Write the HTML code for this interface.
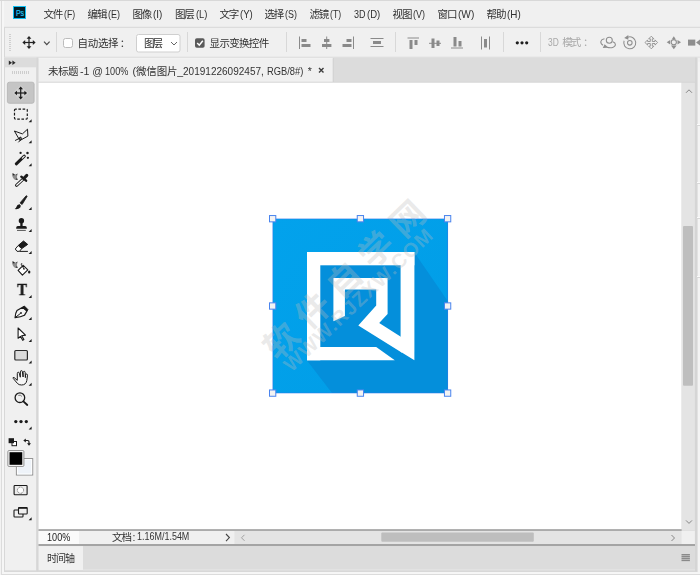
<!DOCTYPE html>
<html lang="zh-CN">
<head>
<meta charset="utf-8">
<title>Photoshop</title>
<style>
html,body{margin:0;padding:0;}
body{width:700px;height:575px;overflow:hidden;background:#f0f0f0;position:relative;
 font-family:"Liberation Sans","Noto Sans CJK SC",sans-serif;font-size:12px;color:#1e1e1e;}
.abs{position:absolute;}
svg{position:absolute;overflow:visible;}
.tx{position:absolute;left:0;line-height:16px;white-space:nowrap;}
.tx span{position:absolute;top:0;white-space:pre;transform-origin:0 50%;}
</style>
</head>
<body>

<!-- window chrome -->
<svg class="abs" style="left:0;top:0;" width="700" height="575" viewBox="0 0 700 575">
  <rect x="0" y="0" width="700" height="575" fill="#f0f0f0"/>
  <rect x="0" y="0" width="700" height="1" fill="#d8d8d8"/>
  <!-- outer frame -->
  <rect x="0" y="1" width="1" height="574" fill="#f3f3f3"/>
  <rect x="1" y="1" width="1" height="574" fill="#dcdcdc"/>
  <rect x="2" y="1" width="2" height="573" fill="#f6f6f6"/>
  <!-- workspace background -->
  <rect x="4" y="57.500" width="693.500" height="514.500" fill="#d8d8d8"/>
  <rect x="2" y="572" width="698" height="2" fill="#f6f6f6"/>
  <rect x="1" y="574" width="699" height="1" fill="#dcdcdc"/>
  <!-- options bar -->
  <rect x="4" y="26.800" width="696" height="30.700" fill="#d8d8d8"/>
  <rect x="5" y="27.800" width="695" height="29" fill="#f0f0f0"/>
  <rect x="5" y="56.800" width="695" height="0.700" fill="#e6e6e6"/>
  <!-- toolbar -->
  <rect x="5" y="57.500" width="31.400" height="512.800" fill="#f0f0f0"/>
  <rect x="4.700" y="57.500" width="31.700" height="9.800" fill="#dcdcdc"/>
  <rect x="36.400" y="57.500" width="2.200" height="514" fill="#d6d6d6"/>
  <!-- tab bar -->
  <rect x="38.600" y="57.500" width="656.700" height="25" fill="#dcdcdc"/>
  <rect x="38.600" y="58.200" width="294.200" height="23.700" fill="#f0f0f0"/>
  <rect x="38.600" y="57.900" width="294.200" height="0.700" fill="#f6f6f6"/>
  <rect x="332.800" y="58" width="0.900" height="23.900" fill="#d0d0d0"/>
  <rect x="38.600" y="81.800" width="656.700" height="0.900" fill="#d2d2d2"/>
  <!-- canvas -->
  <rect x="38.600" y="82.700" width="643" height="446.600" fill="#ffffff"/>
  <!-- v scrollbar -->
  <rect x="681.600" y="82.700" width="13.300" height="448" fill="#e4e4e4"/>
  <rect x="683" y="226" width="10" height="159.700" rx="1" fill="#bebebe"/>
  <!-- status bar -->
  <rect x="38.600" y="529.100" width="643" height="1.900" fill="#ababab"/>
  <rect x="38.600" y="531" width="656.300" height="13" fill="#f0f0f0"/>
  <rect x="38.600" y="531" width="40.400" height="13" fill="#fafafa"/>
  <rect x="234.400" y="531" width="447.200" height="13" fill="#e4e4e4"/>
  <rect x="381.300" y="532.500" width="152.500" height="9.200" rx="1" fill="#bebebe"/>
  <!-- timeline -->
  <rect x="38.600" y="544" width="657.200" height="2.100" fill="#a4a4a4"/>
  <rect x="38.600" y="546.100" width="656.400" height="23.300" fill="#dcdcdc"/>
  <rect x="38.600" y="546.100" width="44.400" height="24.100" fill="#f0f0f0"/>
  <rect x="83" y="569.400" width="612" height="1" fill="#e8e8e8"/>
  <!-- right dock -->
  <rect x="695" y="57.500" width="2" height="514" fill="#d5d5d5"/>
  <rect x="697" y="57.500" width="1" height="514.500" fill="#e2e2e2"/>
  <rect x="698" y="61.700" width="2" height="510.300" fill="#f4f4f4"/>
</svg>

<!-- Ps logo -->
<div class="abs" style="left:13px;top:6px;width:11px;height:11px;background:#001c26;border:1px solid #10bff2;"></div>
<div class="abs" style="left:12.500px;top:6.700px;width:14px;height:11px;line-height:11px;font-size:9.500px;color:#22c6f8;-webkit-text-stroke:0.2px #22c6f8;text-align:center;transform:scaleX(0.740);transform-origin:50% 50%;">Ps</div>

<!-- options bar content -->
<svg class="abs" style="left:0;top:0;" width="700" height="58" viewBox="0 0 700 58">
  <!-- grip -->
  <g fill="#cfcfcf">
    <rect x="9" y="34" width="2" height="1"/><rect x="9" y="36" width="2" height="1"/><rect x="9" y="38" width="2" height="1"/><rect x="9" y="40" width="2" height="1"/><rect x="9" y="42" width="2" height="1"/><rect x="9" y="44" width="2" height="1"/><rect x="9" y="46" width="2" height="1"/><rect x="9" y="48" width="2" height="1"/><rect x="9" y="50" width="2" height="1"/>
  </g>
  <!-- move icon -->
  <g id="moveic" transform="translate(29 42.5)" fill="#222" stroke="none">
    <rect x="-4.5" y="-0.6" width="9" height="1.2"/><rect x="-0.6" y="-4.5" width="1.2" height="9"/>
    <polygon points="0,-6.6 2.4,-3.8 -2.4,-3.8"/><polygon points="0,6.6 2.4,3.8 -2.4,3.8"/>
    <polygon points="-6.6,0 -3.8,-2.4 -3.8,2.4"/><polygon points="6.6,0 3.8,-2.4 3.8,2.4"/>
  </g>
  <polyline points="44,41.600 46.800,44.600 49.600,41.600" fill="none" stroke="#4a4a4a" stroke-width="1.200"/>
  <rect x="56" y="32" width="1" height="20" fill="#d8d8d8"/>
  <rect x="63.500" y="38.500" width="9" height="9" rx="2" fill="#fff" stroke="#bcbcbc"/>
  <!-- dropdown -->
  <rect x="136.5" y="34.5" width="43.5" height="17.5" rx="2" fill="#fff" stroke="#cfcfcf"/>
  <polyline points="171,42 174,45 177,42" fill="none" stroke="#666" stroke-width="1"/>
  <rect x="187" y="32" width="1" height="20" fill="#d8d8d8"/>
  <rect x="195" y="38.200" width="9.600" height="9.600" rx="1.800" fill="#5a5a5a"/>
  <polyline points="197.2,43 199.3,45.2 202.8,40.8" fill="none" stroke="#fff" stroke-width="1.5"/>
  <rect x="286" y="32" width="1" height="20" fill="#d8d8d8"/>
  <!-- align icons -->
  <g fill="#8a8a8a">
    <rect x="299" y="36.5" width="1" height="12.5"/><rect x="301.5" y="39" width="5" height="3"/><rect x="301.5" y="44" width="9" height="3"/>
    <rect x="326.2" y="36.5" width="1" height="12.5"/><rect x="324" y="39" width="5.4" height="3"/><rect x="322" y="44" width="9.4" height="3"/>
    <rect x="353" y="36.5" width="1" height="12.5"/><rect x="346.5" y="39" width="5" height="3"/><rect x="342.5" y="44" width="9" height="3"/>
    <rect x="370.5" y="38" width="13" height="1"/><rect x="373" y="41" width="8" height="3"/><rect x="370.5" y="46" width="13" height="1"/>
  </g>
  <rect x="395" y="32" width="1" height="20" fill="#d8d8d8"/>
  <g fill="#8a8a8a">
    <rect x="407.5" y="37.5" width="11.5" height="1"/><rect x="409.5" y="40" width="3" height="9"/><rect x="414.5" y="40" width="3" height="5"/>
    <rect x="429" y="42.8" width="12" height="1"/><rect x="431.5" y="38.5" width="3" height="9.5"/><rect x="436.5" y="40.5" width="3" height="5.5"/>
    <rect x="451" y="47.5" width="12" height="1"/><rect x="453.5" y="37" width="3" height="9.5"/><rect x="458.5" y="41" width="3" height="5.5"/>
    <rect x="481" y="36.5" width="1" height="13"/><rect x="484" y="39" width="3" height="8.5"/><rect x="489" y="36.5" width="1" height="13"/>
  </g>
  <rect x="503" y="32" width="1" height="20" fill="#d8d8d8"/>
  <g fill="#1e1e1e"><circle cx="517.3" cy="42.8" r="1.6"/><circle cx="522" cy="42.8" r="1.6"/><circle cx="526.7" cy="42.8" r="1.6"/></g>
  <rect x="540" y="32" width="1" height="20" fill="#d8d8d8"/>
  <!-- 3D icons -->
  <g fill="none" stroke="#8e8e8e" stroke-width="1.050">
    <circle cx="609.300" cy="40.300" r="3"/>
    <path d="M604.500,38.700 C600.500,39.500 599.300,42.800 603,45.300 M607,47.200 C611,48.300 615.300,47.500 615.400,44.600 C615.400,43.200 614.200,42.300 612.800,41.800"/>
    <path d="M627.700,37.200 A6,6 0 1 1 624.100,40.800"/>
    <circle cx="629.800" cy="42.800" r="2.300"/>
    <path transform="translate(651.300 42.500)" stroke-width="0.900" stroke-linejoin="round" d="M0,-6.300 L2.600,-3.700 L1,-3.700 L1,-1 L3.700,-1 L3.700,-2.600 L6.300,0 L3.700,2.600 L3.700,1 L1,1 L1,3.700 L2.600,3.700 L0,6.300 L-2.600,3.700 L-1,3.700 L-1,1 L-3.700,1 L-3.700,2.600 L-6.300,0 L-3.700,-2.600 L-3.700,-1 L-1,-1 L-1,-3.700 L-2.600,-3.700 Z"/>
    <circle cx="673.800" cy="42.200" r="2.600"/>
  </g>
  <g fill="#8e8e8e">
    <polygon points="602.800,47.900 608.500,47.700 604.600,44.300"/>
    <polygon points="624.200,37.900 628.300,35 628.300,39.800"/>
    <polygon points="666.700,42.200 670.200,39.900 670.200,44.500"/><polygon points="681,42.200 677.500,39.900 677.500,44.500"/>
    <polygon points="673.800,36.300 672,38.900 675.600,38.900"/><polygon points="673.800,49.200 671,45.600 676.600,45.600"/>
    <rect x="688" y="39.600" width="7.300" height="6"/><polygon points="696,42.600 700,39.600 700,45.600"/>
  </g>
</svg>

<svg class="abs" style="left:0;top:0;" width="700" height="575" viewBox="0 0 700 575">
  <defs>
    <linearGradient id="bg" x1="0" y1="0" x2="1" y2="1">
      <stop offset="0" stop-color="#02a2ec"/><stop offset="1" stop-color="#019de6"/>
    </linearGradient>
    <clipPath id="sq"><rect x="273" y="219" width="175" height="174"/></clipPath>
    <g id="wm" font-family="'Liberation Sans','Noto Sans CJK SC',sans-serif" stroke="none">
      <g transform="translate(344.7 280) rotate(-44)">
        <text x="5" y="12" font-size="34" font-weight="bold" text-anchor="middle" letter-spacing="10">软件自学网</text>
      </g>
      <g transform="translate(358.5 299.5) rotate(-43.5)">
        <text x="0" y="7" font-size="20" font-weight="bold" text-anchor="middle" letter-spacing="1.200">WWW.RJZXW.COM</text>
      </g>
    </g>
  </defs>
  <rect x="273" y="219" width="175" height="174" fill="url(#bg)"/>
  <polygon points="307,252 414,252 448,301.500 448,393 332,393 307,360.500" fill="#048fdb"/>
  <g fill="#fff">
    <rect x="307" y="252" width="107.4" height="13.3"/>
    <rect x="307" y="252" width="13.3" height="108.3"/>
    <polygon points="307,346.9 376.2,346.9 394.8,360.3 307,360.3"/>
    <polygon points="400.6,252 414.4,252 414.4,360.3 400.6,351.8"/>
    <polygon points="333.4,278 387.6,278 387.6,314 379.2,323.1 402,337.4 402,352.7 358.3,325.6 376.2,305.5 376.2,289.5 344.9,289.5 344.9,316 333.4,321.2"/>
  </g>
  <use href="#wm" fill="#bdbdbd" fill-opacity="0.330"/>
  <!-- transform box -->
  <rect x="272.800" y="218.900" width="174.900" height="174.100" fill="none" stroke="#2f7be8" stroke-width="0.700" stroke-opacity="0.800"/>
  <g fill="#f3f3f3" stroke="#4a84ee" stroke-width="1">
    <rect x="269.500" y="215.550" width="6.300" height="6.300"/>
    <rect x="357.250" y="215.550" width="6.300" height="6.300"/>
    <rect x="444.450" y="215.550" width="6.300" height="6.300"/>
    <rect x="269.500" y="302.850" width="6.300" height="6.300"/>
    <rect x="444.450" y="302.850" width="6.300" height="6.300"/>
    <rect x="269.500" y="389.950" width="6.300" height="6.300"/>
    <rect x="357.250" y="389.950" width="6.300" height="6.300"/>
    <rect x="444.450" y="389.950" width="6.300" height="6.300"/>
  </g>
</svg>

<svg class="abs" style="left:0;top:0;" width="40" height="575" viewBox="0 0 40 575">
  <!-- header arrows + grip -->
  <g fill="#2a2a2a"><polygon points="8.800,60.500 12,62.800 8.800,65.100"/><polygon points="12.400,60.500 15.600,62.800 12.400,65.100"/></g>
  <g fill="#cdcdcd">
    <rect x="12" y="71" width="1" height="3"/><rect x="14" y="71" width="1" height="3"/><rect x="16" y="71" width="1" height="3"/><rect x="18" y="71" width="1" height="3"/><rect x="20" y="71" width="1" height="3"/><rect x="22" y="71" width="1" height="3"/><rect x="24" y="71" width="1" height="3"/><rect x="26" y="71" width="1" height="3"/><rect x="28" y="71" width="1" height="3"/>
  </g>
  <!-- selected move tool -->
  <rect x="7.400" y="82.200" width="26.700" height="21.100" rx="2" fill="#c5c5c5" stroke="#b2b2b2" stroke-width="0.800"/>
  <polygon points="20.700,85.200 28.500,93 20.700,100.800 12.900,93" fill="#fff" fill-opacity="0.220"/>
  <g transform="translate(20.7 93)" fill="#1a1a1a">
    <rect x="-4.500" y="-0.600" width="9" height="1.200"/><rect x="-0.600" y="-4.500" width="1.200" height="9"/>
    <polygon points="0,-6.400 2.300,-3.700 -2.300,-3.700"/><polygon points="0,6.400 2.300,3.700 -2.300,3.700"/>
    <polygon points="-6.400,0 -3.700,-2.300 -3.700,2.300"/><polygon points="6.400,0 3.700,-2.300 3.700,2.300"/>
  </g>
  <!-- flyout triangles -->
  <g fill="#1a1a1a">
    <polygon points="31.600,119.300 31.600,122.200 28.600,122.200"/>
    <polygon points="31.600,140.300 31.600,143.200 28.600,143.200"/>
    <polygon points="31.600,163.300 31.600,166.200 28.600,166.200"/>
    <polygon points="31.600,207.100 31.600,210.000 28.600,210.000"/>
    <polygon points="31.600,229.100 31.600,232.000 28.600,232.000"/>
    <polygon points="31.600,251.000 31.600,253.900 28.600,253.900"/>
    <polygon points="31.600,295.100 31.600,298.000 28.600,298.000"/>
    <polygon points="31.600,317.100 31.600,320.000 28.600,320.000"/>
    <polygon points="31.600,339.000 31.600,341.900 28.600,341.900"/>
    <polygon points="31.600,360.500 31.600,363.400 28.600,363.400"/>
    <polygon points="31.600,382.800 31.600,385.700 28.600,385.700"/>
    <polygon points="31.600,426.500 31.600,429.400 28.600,429.400"/>
    <polygon points="31.600,517.300 31.600,520.200 28.600,520.200"/>
  </g>
  <!-- marquee -->
  <rect x="14.500" y="109.100" width="12.800" height="10" rx="1" fill="none" stroke="#1a1a1a" stroke-width="1.200" stroke-dasharray="2.600 1.600" stroke-dashoffset="1.300"/>
  <!-- polygonal lasso -->
  <g fill="none" stroke="#1a1a1a" stroke-width="1" stroke-linejoin="round">
    <polygon points="14.400,131 22.400,133.900 27.500,129.200 27.900,136.100 19.900,140.500"/>
    <path d="M21,137.600 L15.100,140.500 M21.700,138.700 L18.400,142.300"/>
    <circle cx="20.400" cy="138.200" r="1"/>
  </g>
  <!-- magic wand -->
  <line x1="16.300" y1="163.800" x2="24.300" y2="156.200" stroke="#1a1a1a" stroke-width="3" stroke-linecap="round"/>
  <line x1="22.300" y1="158.100" x2="24.200" y2="156.300" stroke="#f0f0f0" stroke-width="1.200" stroke-linecap="round"/>
  <g fill="#1a1a1a"><circle cx="20.600" cy="152.900" r="1.150"/><circle cx="27.500" cy="152.900" r="1.250"/><circle cx="27.900" cy="157.800" r="1.150"/></g>
  <!-- eyedropper -->
  <g>
    <line x1="16.500" y1="185.300" x2="22.600" y2="179.700" stroke="#1a1a1a" stroke-width="3" stroke-linecap="round"/>
    <line x1="16.600" y1="185.200" x2="22.600" y2="179.700" stroke="#fff" stroke-width="1.200" stroke-linecap="round"/>
    <line x1="21.300" y1="176.700" x2="26.100" y2="180.700" stroke="#1a1a1a" stroke-width="2.400" stroke-linecap="round"/>
    <line x1="23.700" y1="178.600" x2="26.800" y2="175.400" stroke="#1a1a1a" stroke-width="3" stroke-linecap="round"/>
    <g transform="translate(0 -88)">
      <path d="M12.800,261.300 L15,262.800 L17.600,261.700 Q16.200,264.600 17.800,267.700 L14.400,267.400 Q11.400,265 12.800,261.300 Z" fill="#8e8e8e"/>
      <polygon points="12.600,261.100 15.200,262.900 12.700,263.400" fill="#2a2a2a"/>
      <polygon points="17.900,267.900 15.200,267.600 16.600,266.200" fill="#2a2a2a"/>
      <polygon points="17.700,261.500 16.600,263.600 15.600,262.600" fill="#555"/>
    </g>
  </g>
  <!-- brush -->
  <path d="M27.200,196.200 L22.100,204.500 L20,202.900 L26.200,195.700 Z" fill="#1a1a1a" stroke="#1a1a1a" stroke-width="0.800" stroke-linejoin="round"/>
  <path d="M19.700,204.300 q2,1.500 0.600,3.300 q-1.800,2 -5.600,1.500 q1.500,-0.800 1.800,-2.300 q0.500,-2.600 3.200,-2.500 Z" fill="#1a1a1a"/>
  <!-- stamp -->
  <g fill="#1a1a1a">
    <circle cx="21.400" cy="220.800" r="2.700"/>
    <rect x="20.300" y="222.500" width="2.300" height="4.500"/>
    <path d="M16.200,228.700 v-1 q0,-1.600 1.600,-1.600 h7.400 q1.600,0 1.600,1.600 v1 Z"/>
    <rect x="17" y="229.900" width="8.800" height="0.900" fill="#444"/>
  </g>
  <!-- eraser -->
  <g stroke="#1a1a1a" stroke-width="1" stroke-linejoin="round">
    <polygon points="23.500,241 27.700,244.400 21.700,248.600 18.200,245.500" fill="#1a1a1a"/>
    <polygon points="18.200,245.500 21.700,248.600 19.500,251.300 17,251.300 15.300,249" fill="#fff"/>
    <line x1="19.500" y1="251.400" x2="27.900" y2="251.400"/>
  </g>
  <!-- paint bucket -->
  <g>
    <polygon points="23.200,265.300 27.800,269.900 22.400,275.100 18.100,270.300" fill="#fff" stroke="#1a1a1a" stroke-width="1.100" stroke-linejoin="round"/>
    <path d="M24,269 L21.300,264.500 q-0.300,-1.300 1,-0.600" fill="none" stroke="#1a1a1a" stroke-width="1"/>
    <ellipse cx="29.200" cy="272" rx="1.200" ry="1.500" fill="#1a1a1a"/>
    <circle cx="24" cy="269" r="0.800" fill="#1a1a1a"/>
    <g transform="translate(0 0)">
      <path d="M12.800,261.300 L15,262.800 L17.600,261.700 Q16.200,264.600 17.800,267.700 L14.400,267.400 Q11.400,265 12.800,261.300 Z" fill="#8e8e8e"/>
      <polygon points="12.600,261.100 15.200,262.900 12.700,263.400" fill="#2a2a2a"/>
      <polygon points="17.900,267.900 15.200,267.600 16.600,266.200" fill="#2a2a2a"/>
      <polygon points="17.700,261.500 16.600,263.600 15.600,262.600" fill="#555"/>
    </g>
  </g>
  <!-- pen -->
  <g stroke="#1a1a1a" stroke-linejoin="round">
    <path d="M15.100,317.700 Q15.300,313 17,310.500 L22.600,307.300 L27,311 L24.400,315.300 Q21,317.200 15.100,317.700 Z" fill="#f4f4f4" stroke-width="1.300"/>
    <polygon points="22.600,307.300 24.300,306 27.900,309.600 27,311" fill="#1a1a1a" stroke-width="1"/>
    <line x1="15.300" y1="317.500" x2="20.600" y2="313.300" stroke-width="1"/>
    <circle cx="21" cy="313" r="0.900" fill="#1a1a1a" stroke="none"/>
  </g>
  <!-- path selection arrow -->
  <path d="M18.100,328 L18.100,338.300 L20.400,336.300 L22.700,340.300 L23.900,339.600 L21.700,335.700 L25.500,335.100 Z" fill="#fff" stroke="#1a1a1a" stroke-width="1.100" stroke-linejoin="round"/>
  <!-- rectangle -->
  <rect x="14.800" y="350.500" width="12.600" height="9.500" rx="1" fill="#dadada" stroke="#2a2a2a" stroke-width="1.200"/>
  <!-- hand -->
  <path d="M17.300,380.300 L14,377.500 q-1.300,-0.400 -0.800,0.900 L17.500,383.500 q1.400,1.500 4,1.500 q4.500,0 5.300,-4.500 L27.500,375.200 q-0.100,-1.200 -1,-1.200 q-0.900,0 -1,1.200 L25.400,377.600 L25.200,372.500 q-0.100,-1.200 -1,-1.200 q-0.900,0 -1,1.200 L23.100,377 L22.400,371.800 q-0.100,-1.200 -1,-1.200 q-0.900,0 -1,1.200 L20.300,377.200 L19.300,373.200 q-0.300,-1.200 -1.200,-1 q-0.900,0.200 -0.800,1.400 Z" fill="#f6f6f6" stroke="#1a1a1a" stroke-width="1" stroke-linejoin="round"/>
  <!-- zoom -->
  <circle cx="19.900" cy="397.700" r="4.800" fill="none" stroke="#1a1a1a" stroke-width="1.300"/>
  <path d="M18.300,395.400 q2.200,-0.900 3.600,1" fill="none" stroke="#555" stroke-width="0.800"/>
  <line x1="23.400" y1="401.300" x2="27.300" y2="405" stroke="#1a1a1a" stroke-width="1.800" stroke-linecap="round"/>
  <!-- more -->
  <g fill="#1a1a1a"><circle cx="15.800" cy="421.600" r="1.650"/><circle cx="21" cy="421.600" r="1.650"/><circle cx="26.300" cy="421.600" r="1.650"/></g>
  <!-- default colors / swap -->
  <rect x="12" y="441.500" width="4.500" height="4.200" fill="#fff" stroke="#1a1a1a" stroke-width="1"/>
  <rect x="8.600" y="438.200" width="5.400" height="5" fill="#1a1a1a"/>
  <path d="M25,440.500 h2.600 q1.400,0 1.400,1.400 v2" fill="none" stroke="#1a1a1a" stroke-width="1.200"/>
  <polygon points="23.300,440.500 25.800,438.500 25.800,442.500" fill="#1a1a1a"/>
  <polygon points="29,445.800 27,443.300 31,443.300" fill="#1a1a1a"/>
  <!-- bg / fg swatches -->
  <rect x="16.400" y="458.600" width="16.300" height="16.400" fill="#eef3f9" stroke="#8c8c8c" stroke-width="1"/>
  <rect x="17.400" y="459.600" width="14.300" height="14.400" fill="none" stroke="#fff" stroke-width="1"/>
  <rect x="7.900" y="450.600" width="16" height="15.800" rx="1" fill="#fff" stroke="#8c8c8c" stroke-width="1"/>
  <rect x="9.500" y="452.200" width="12.800" height="12.600" fill="#000"/>
  <!-- quick mask -->
  <rect x="14.100" y="485.500" width="13" height="9.300" rx="0.800" fill="#ececec" stroke="#1a1a1a" stroke-width="1.100"/>
  <circle cx="20.500" cy="490.200" r="3.100" fill="#fff" stroke="#555" stroke-width="0.800" stroke-dasharray="1 0.600"/>
  <!-- screen mode -->
  <rect x="14" y="510" width="9" height="7" rx="0.800" fill="#f0f0f0" stroke="#1a1a1a" stroke-width="1.100"/>
  <rect x="18.500" y="507.500" width="8.700" height="6.500" rx="0.800" fill="#f0f0f0" stroke="#1a1a1a" stroke-width="1.100"/>
  <rect x="18.500" y="507.200" width="8.700" height="1.600" fill="#1a1a1a"/>
</svg>
<div class="abs" style="left:14.2px;top:279.1px;will-change:transform;width:16px;text-align:center;font-family:'Liberation Serif',serif;font-weight:bold;font-size:17.5px;line-height:20px;color:#1a1a1a;-webkit-text-stroke:0.35px #1a1a1a;transform:scaleX(0.86);transform-origin:50% 50%;">T</div>


<!-- misc icons -->
<svg class="abs" style="left:0;top:0;" width="700" height="575" viewBox="0 0 700 575">
  <g fill="none" stroke="#858585" stroke-width="1">
    <polyline points="686,92.800 689,89.800 692,92.800"/>
    <polyline points="686,520.400 689,523.400 692,520.400"/>
    <polyline points="244.500,534.800 241.500,537.800 244.500,540.800" stroke="#a0a0a0"/>
    <polyline points="671.500,535 674.500,538 671.500,541"/>
  </g>
  <polyline points="226,534 229.400,537.600 226,541.200" fill="none" stroke="#444" stroke-width="1.100"/>
  <g fill="#8a8a8a"><rect x="681.500" y="554" width="8.400" height="1.450"/><rect x="681.500" y="555.900" width="8.400" height="1.450"/><rect x="681.500" y="557.800" width="8.400" height="1.450"/><rect x="681.500" y="559.700" width="8.400" height="1.450"/></g>
  <path d="M319,67.900 l4.500,4.500 M323.500,67.900 l-4.500,4.500" stroke="#3c3c3c" stroke-width="1.400" fill="none"/>
  <g fill="#fbfbfb"><rect x="697" y="124" width="3" height="1"/><rect x="697" y="182" width="3" height="1"/><rect x="697" y="217" width="3" height="1"/><rect x="697" y="276" width="3" height="1"/></g>
  <g fill="#d8d8d8"><rect x="696.500" y="125" width="3.500" height="1"/><rect x="696.500" y="183" width="3.500" height="1"/><rect x="696.500" y="218" width="3.500" height="1"/><rect x="696.500" y="277" width="3.500" height="1"/></g>
</svg>
<div class="tx" style="top:5.60px;font-size:10.5px;color:#303030;"><span style="left:43.40px;letter-spacing:-1.20px;">文件</span><span style="left:64.10px;transform:scaleX(0.829);">(F)</span></div>
<div class="tx" style="top:5.60px;font-size:10.5px;color:#303030;"><span style="left:87.60px;letter-spacing:-1.20px;">编辑</span><span style="left:108.30px;transform:scaleX(0.857);">(E)</span></div>
<div class="tx" style="top:5.60px;font-size:10.5px;color:#303030;"><span style="left:132.50px;letter-spacing:-1.20px;">图像</span><span style="left:153.20px;transform:scaleX(0.940);">(I)</span></div>
<div class="tx" style="top:5.60px;font-size:10.5px;color:#303030;"><span style="left:174.90px;letter-spacing:-1.20px;">图层</span><span style="left:195.60px;transform:scaleX(0.892);">(L)</span></div>
<div class="tx" style="top:5.60px;font-size:10.5px;color:#303030;"><span style="left:219.40px;letter-spacing:-1.20px;">文字</span><span style="left:240.10px;transform:scaleX(0.914);">(Y)</span></div>
<div class="tx" style="top:5.60px;font-size:10.5px;color:#303030;"><span style="left:264.50px;letter-spacing:-1.20px;">选择</span><span style="left:285.20px;transform:scaleX(0.850);">(S)</span></div>
<div class="tx" style="top:5.60px;font-size:10.5px;color:#303030;"><span style="left:309.40px;letter-spacing:-1.20px;">滤镜</span><span style="left:330.10px;transform:scaleX(0.829);">(T)</span></div>
<div class="tx" style="top:5.60px;font-size:10.5px;color:#303030;"><span style="left:354.40px;transform:scaleX(0.857);">3D</span><span style="left:367.10px;transform:scaleX(0.907);">(D)</span></div>
<div class="tx" style="top:5.60px;font-size:10.5px;color:#303030;"><span style="left:392.60px;letter-spacing:-1.20px;">视图</span><span style="left:413.30px;transform:scaleX(0.857);">(V)</span></div>
<div class="tx" style="top:5.60px;font-size:10.5px;color:#303030;"><span style="left:437.60px;letter-spacing:-1.20px;">窗口</span><span style="left:458.30px;transform:scaleX(0.965);">(W)</span></div>
<div class="tx" style="top:5.60px;font-size:10.5px;color:#303030;"><span style="left:486.60px;letter-spacing:-1.20px;">帮助</span><span style="left:507.30px;transform:scaleX(0.940);">(H)</span></div>
<div class="tx" style="top:35.00px;font-size:10.5px;color:#303030;"><span style="left:77.60px;letter-spacing:-0.33px;">自动选择</span><span style="left:119.80px;">：</span></div>
<div class="tx" style="top:35.00px;font-size:10.5px;color:#303030;"><span style="left:144.00px;letter-spacing:-2.00px;">图层</span></div>
<div class="tx" style="top:35.20px;font-size:10.5px;color:#303030;"><span style="left:209.60px;letter-spacing:-0.68px;">显示变换控件</span></div>
<div class="tx" style="top:34.00px;font-size:10.5px;color:#a8a8a8;"><span style="left:548.10px;transform:scaleX(0.800);">3D</span> <span style="left:562.30px;letter-spacing:-2.00px;">模式</span><span style="left:582.90px;">：</span></div>
<div class="tx" style="top:62.70px;font-size:10.5px;color:#333;"><span style="left:48.10px;letter-spacing:-0.55px;">未标题</span><span style="left:79.80px;transform:scaleX(1.011);">-1</span> <span style="left:92.20px;">@</span> <span style="left:105.40px;transform:scaleX(0.870);">100%</span> <span style="left:132.60px;letter-spacing:-0.15px;">(微信图片</span><span style="left:177.25px;">_</span><span style="left:182.80px;transform:scaleX(0.955);">20191226092457,</span> <span style="left:267.10px;transform:scaleX(0.890);">RGB/8#)</span> <span style="left:307.65px;">*</span></div>
<div class="tx" style="top:529.30px;font-size:10.5px;color:#222;"><span style="left:47.00px;transform:scaleX(0.867);">100%</span></div>
<div class="tx" style="top:529.10px;font-size:10.5px;color:#333;"><span style="left:111.90px;letter-spacing:-0.90px;">文档</span><span style="left:132.45px;">:</span><span style="left:136.60px;transform:scaleX(0.875);font-size:10.25px;">1.16M/1.54M</span></div>
<div class="tx" style="top:550.90px;font-size:10px;color:#333;"><span style="left:47.00px;letter-spacing:-1.00px;">时间轴</span></div>
</body>
</html>
